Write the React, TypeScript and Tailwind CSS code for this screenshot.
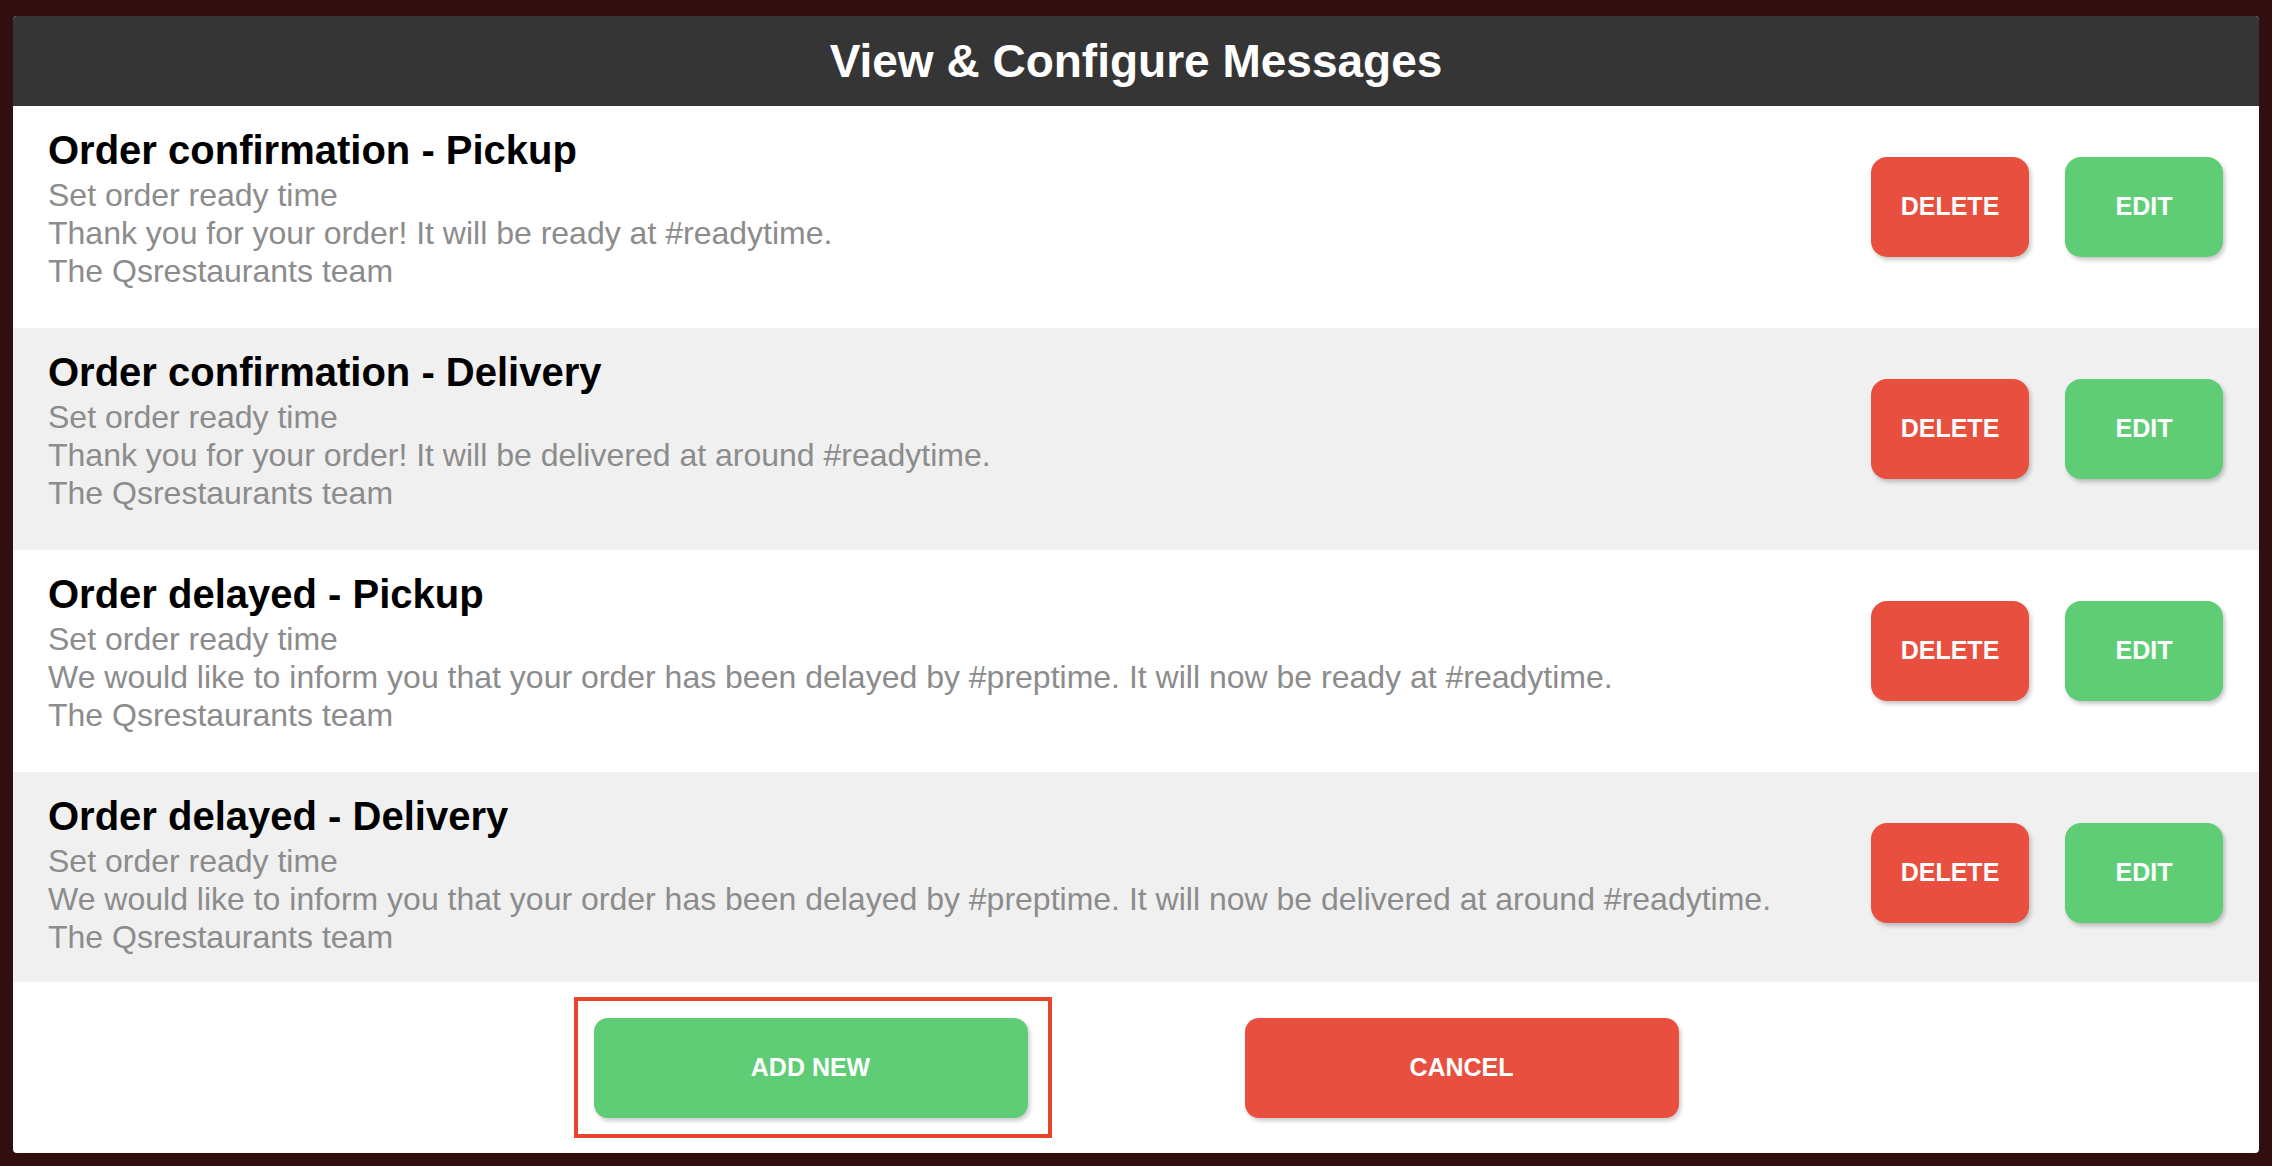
const messages = [
  {
    title: 'Order confirmation - Pickup',
    lines: [
      'Set order ready time',
      'Thank you for your order! It will be ready at #readytime.',
      'The Qsrestaurants team',
    ],
  },
  {
    title: 'Order confirmation - Delivery',
    lines: [
      'Set order ready time',
      'Thank you for your order! It will be delivered at around #readytime.',
      'The Qsrestaurants team',
    ],
  },
  {
    title: 'Order delayed - Pickup',
    lines: [
      'Set order ready time',
      'We would like to inform you that your order has been delayed by #preptime. It will now be ready at #readytime.',
      'The Qsrestaurants team',
    ],
  },
  {
    title: 'Order delayed - Delivery',
    lines: [
      'Set order ready time',
      'We would like to inform you that your order has been delayed by #preptime. It will now be delivered at around #readytime.',
      'The Qsrestaurants team',
    ],
  },
]

const font = { fontFamily: '"Liberation Sans", Arial, Helvetica, sans-serif' }

function SmallButton({ label, color }: { label: string; color: string }) {
  return (
    <button
      className={`w-[158px] h-[100px] rounded-[16px] text-white font-bold text-[25px] shadow-[2px_3px_4px_rgba(0,0,0,0.22)] ${color}`}
    >
      {label}
    </button>
  )
}

export default function App() {
  return (
    <div className="h-[1166px] w-full bg-[#320e0e] px-[13px] pt-[16px] pb-[13px]" style={font}>
      <div className="h-full flex flex-col bg-white rounded-[4px] overflow-hidden">
        <div className="h-[90px] shrink-0 bg-[#353535] flex items-center justify-center">
          <h1 className="text-white font-bold text-[46px] leading-none">View &amp; Configure Messages</h1>
        </div>

        <div className="h-[876px] shrink-0 overflow-hidden">
          {messages.map((m, i) => (
            <div
              key={m.title}
              className={`h-[222px] flex justify-between pl-[35px] pr-[36px] ${i % 2 === 1 ? 'bg-[#f0f0f0]' : 'bg-white'}`}
            >
              <div className="pt-[23px]">
                <div className="text-black font-bold text-[40px] leading-[42px]">{m.title}</div>
                <div className="mt-[5px] text-[#8c8c8c] text-[32px] leading-[38px]">
                  {m.lines.map((l) => (
                    <div key={l}>{l}</div>
                  ))}
                </div>
              </div>
              <div className="pt-[51px] flex gap-[36px] shrink-0">
                <SmallButton label="DELETE" color="bg-[#e84f3e]" />
                <SmallButton label="EDIT" color="bg-[#5ecd75]" />
              </div>
            </div>
          ))}
        </div>

        <div className="flex-1 flex items-center justify-center gap-[217px]">
          <div className="relative">
            <button className="w-[434px] h-[100px] rounded-[14px] bg-[#5ecd75] text-white font-bold text-[25px] shadow-[2px_3px_4px_rgba(0,0,0,0.2)]">
              ADD NEW
            </button>
            <div className="absolute -left-[20px] -right-[24px] -top-[21px] -bottom-[20px] border-[4px] border-[#e8462c] pointer-events-none" />
          </div>
          <button className="w-[434px] h-[100px] rounded-[14px] bg-[#e84f3e] text-white font-bold text-[25px] shadow-[2px_3px_4px_rgba(0,0,0,0.2)]">
            CANCEL
          </button>
        </div>
      </div>
    </div>
  )
}
